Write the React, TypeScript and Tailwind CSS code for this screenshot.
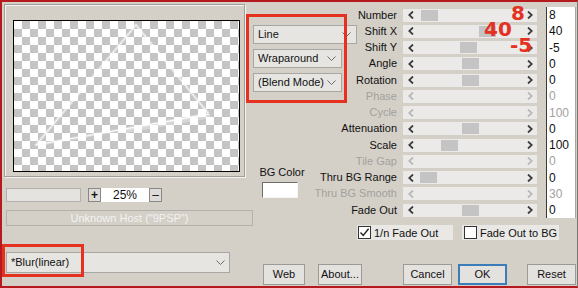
import type { ReactNode } from "react";

type Row = { label: string; value: string; thumb?: number; disabled?: boolean };

const rows: Row[] = [
  { label: "Number", value: "8", thumb: 18 },
  { label: "Shift X", value: "40", thumb: 76 },
  { label: "Shift Y", value: "-5", thumb: 57 },
  { label: "Angle", value: "0", thumb: 59 },
  { label: "Rotation", value: "0", thumb: 59 },
  { label: "Phase", value: "0", disabled: true },
  { label: "Cycle", value: "100", disabled: true },
  { label: "Attenuation", value: "0", thumb: 59 },
  { label: "Scale", value: "100", thumb: 38 },
  { label: "Tile Gap", value: "0", disabled: true },
  { label: "Thru BG Range", value: "0", thumb: 17 },
  { label: "Thru BG Smooth", value: "30", disabled: true },
  { label: "Fade Out", value: "0", thumb: 59 },
];

function Chevron() {
  return (
    <svg width="9" height="5" viewBox="0 0 9 5" className="shrink-0">
      <path d="M0.5 0.5 L4.5 4.5 L8.5 0.5" fill="none" stroke="#6b6b6b" strokeWidth="1" />
    </svg>
  );
}

function Arrow({ dir, disabled }: { dir: "l" | "r"; disabled?: boolean }) {
  return (
    <svg width="6" height="8" viewBox="0 0 6 8">
      <path
        d={dir === "l" ? "M5 0.5 L1.2 4 L5 7.5" : "M1 0.5 L4.8 4 L1 7.5"}
        fill="none"
        stroke={disabled ? "#b8b8b8" : "#3c3c3c"}
        strokeWidth="1.8"
      />
    </svg>
  );
}

function Select({ w, children }: { w: string; children: ReactNode }) {
  return (
    <div
      className={`${w} flex h-[19px] items-center justify-between border border-[#a9a7a3] bg-[#e6e5e2] pl-[4px] pr-[5px] text-[11px] text-[#111]`}
    >
      <span>{children}</span>
      <Chevron />
    </div>
  );
}

function Btn({ w, ml, children, focus }: { w: string; ml: string; children: ReactNode; focus?: boolean }) {
  return (
    <div
      className={`${w} ${ml} flex h-[21px] items-center justify-center bg-[#e4e2df] text-[11px] text-[#111] ${
        focus ? "border-2 border-[#3c7cb8]" : "border border-[#9c9a97]"
      }`}
    >
      {children}
    </div>
  );
}

export default function App() {
  return (
    <div
      className="relative h-[288px] w-[578px] overflow-hidden bg-[#d4d0c8] text-[#111]"
      style={{ fontFamily: '"Liberation Sans", Arial, sans-serif' }}
    >
      <div className="flex h-[243px]">
        {/* left: preview */}
        <div className="w-[252px] shrink-0">
          <div className="ml-[4px] mt-[4px] h-[173px] w-[241px] border border-[#a09e99] shadow-[inset_1px_1px_0_#f4f3f1,1px_1px_0_#f4f3f1]">
            <div className="relative ml-[8px] mt-[15px] h-[152px] w-[227px] border border-black bg-[conic-gradient(#c4c4c4_25%,#ffffff_0_50%,#c4c4c4_0_75%,#ffffff_0)] bg-size-[16px_16px]">
              <svg width="225" height="150" viewBox="0 0 225 150" className="block">
                <g fill="none" stroke="#ffffff" strokeLinecap="round">
                  <path d="M122 4 L22 124 M122 4 L194 92 M22 124 L194 93" strokeWidth="3" opacity="0.35" />
                  <path d="M122 4 L22 124 M122 4 L194 92 M22 124 L194 93" strokeWidth="1" opacity="0.9" />
                  <path d="M110 110 L194 95" strokeWidth="5" opacity="0.3" />
                </g>
              </svg>
            </div>
          </div>
          <div className="mt-[11px] flex h-[14px]">
            <div className="ml-[6px] h-[14px] w-[75px] border border-[#b2b0ac] bg-[#e4e3e0]" />
            <div className="ml-[7px] flex h-[14px] w-[74px] items-center justify-between bg-white">
              <div className="flex h-[14px] w-[13px] items-center justify-center border border-[#8a8884] bg-[#dedcd8] text-[12px] font-bold leading-none">
                +
              </div>
              <span className="text-[12px] leading-none">25%</span>
              <div className="flex h-[14px] w-[13px] items-center justify-center border border-[#8a8884] bg-[#dedcd8] text-[12px] leading-none">
                –
              </div>
            </div>
          </div>
          <div className="ml-[6px] mt-[8px] flex h-[16px] w-[247px] items-center justify-center border border-[#b3b1ac] text-[11px] text-[#f6f5f3] [text-shadow:0_0_1px_#c8c6c2]">
            Unknown Host ("9PSP")
          </div>
        </div>

        {/* middle: dropdowns + bg color */}
        <div className="w-[105px] shrink-0 pl-[1px]">
          <div className="mt-[25px]">
            <Select w="w-[104px]">Line</Select>
          </div>
          <div className="mt-[5px]">
            <Select w="w-[89px]">Wraparound</Select>
          </div>
          <div className="mt-[5px]">
            <Select w="w-[89px]">(Blend Mode)</Select>
          </div>
          <div className="ml-[6px] mt-[74px] w-[46px] text-center text-[11px] leading-[13px]">BG Color</div>
          <div className="ml-[9px] mt-[3px] h-[16px] w-[36px] border border-t-[#6f6d69] border-l-[#6f6d69] border-r-[#f4f4f4] border-b-[#f4f4f4] bg-white" />
        </div>

        {/* right: sliders */}
        <div className="flex-1 pt-[7px]">
          {rows.map((r) => (
            <div key={r.label} className="flex h-[16.25px] items-center">
              <div
                className={`flex w-[40px] justify-end whitespace-nowrap text-[11px] leading-none ${
                  r.disabled ? "text-[#a3a19d]" : "text-[#111]"
                }`}
              >
                {r.label}
              </div>
              <div className="relative ml-[6px] flex h-[13px] w-[134px] items-center justify-between bg-[#ebeae8] pl-[5px] pr-[4px]">
                <Arrow dir="l" disabled={r.disabled} />
                {r.thumb !== undefined && (
                  <div className="absolute top-[1px] h-[11px] w-[17px] bg-[#c4c4c4]" style={{ left: r.thumb }} />
                )}
                <Arrow dir="r" disabled={r.disabled} />
              </div>
              <div
                className={`ml-[9px] flex h-[16.25px] w-[30px] items-center border-l border-l-[#3a3a3a] border-r border-r-[#a8a6a2] bg-white pl-[2px] text-[12px] leading-none ${
                  r.disabled ? "text-[#a3a19d]" : "text-[#111]"
                }`}
              >
                {r.value}
              </div>
            </div>
          ))}
          <div className="mt-[7px] flex h-[15px] items-center text-[11px]">
            <div className="flex h-[15px] w-[96px] items-center bg-[#e9e8e5] pl-[1px]">
              <div className="flex h-[13px] w-[13px] items-center justify-center border border-[#333] bg-white">
                <svg width="11" height="11" viewBox="0 0 11 11">
                  <path d="M1.5 5.5 L4.2 8.4 L9.6 1.8" fill="none" stroke="#222" strokeWidth="1.4" />
                </svg>
              </div>
              <span className="ml-[3px]">1/n Fade Out</span>
            </div>
            <div className="ml-[9px] flex h-[15px] w-[97px] items-center bg-[#e9e8e5] pl-[2px]">
              <div className="h-[13px] w-[13px] border border-[#333] bg-white" />
              <span className="ml-[3px]">Fade Out to BG</span>
            </div>
          </div>
        </div>
      </div>

      {/* bottom: preset + buttons */}
      <div className="flex items-start">
        <div className="ml-[6px] mt-[9px] flex h-[21px] w-[224px] items-center justify-between border border-[#a9a7a3] bg-[#e6e5e2] pl-[4px] pr-[4px] text-[11px]">
          <span>*Blur(linear)</span>
          <Chevron />
        </div>
        <div className="mt-[21px] flex">
          <Btn w="w-[42px]" ml="ml-[33px]">Web</Btn>
          <Btn w="w-[44px]" ml="ml-[13px]">About...</Btn>
          <Btn w="w-[49px]" ml="ml-[41px]">Cancel</Btn>
          <Btn w="w-[49px]" ml="ml-[6px]" focus>
            OK
          </Btn>
          <Btn w="w-[49px]" ml="ml-[20px]">Reset</Btn>
        </div>
      </div>

      {/* annotations drawn over the dialog */}
      <div className="pointer-events-none absolute left-[246px] top-[14px] h-[89px] w-[101px] border-[3px] border-[#e5311f]" />
      <div className="pointer-events-none absolute left-[2px] top-[244px] h-[33px] w-[82px] border-[3px] border-[#e5311f]" />
      <div className="pointer-events-none absolute left-[511px] top-[3px] font-['DejaVu_Sans',sans-serif] text-[20px] font-bold leading-[20px] text-[#e5311f]">
        8
      </div>
      <div className="pointer-events-none absolute left-[484px] top-[19px] font-['DejaVu_Sans',sans-serif] text-[20px] font-bold leading-[20px] text-[#e5311f]">
        40
      </div>
      <div className="pointer-events-none absolute left-[510px] top-[35px] font-['DejaVu_Sans',sans-serif] text-[20px] font-bold leading-[20px] text-[#e5311f]">
        -5
      </div>
      <div className="pointer-events-none absolute inset-0 border-t-2 border-l-2 border-b-2 border-r border-[#b51a1e] border-r-[#7a7874]" />
    </div>
  );
}
